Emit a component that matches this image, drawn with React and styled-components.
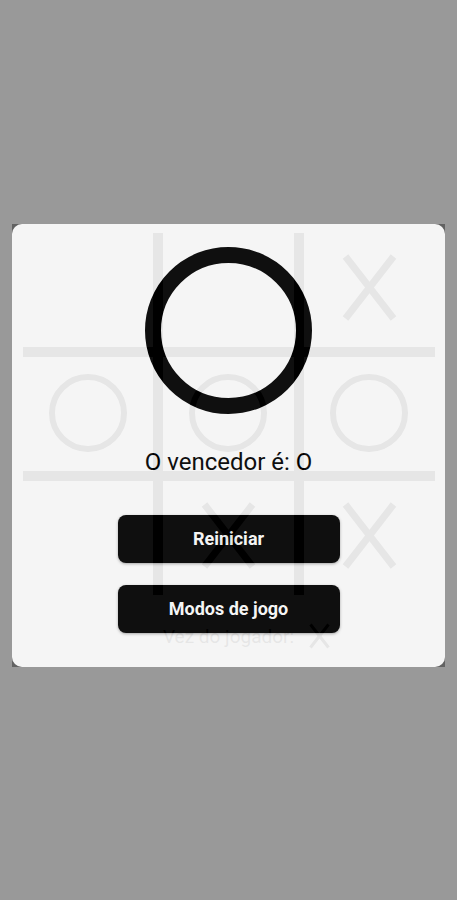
import React from 'react'
import styled, { createGlobalStyle } from 'styled-components'

const GlobalStyle = createGlobalStyle`
  html, body {
    margin: 0;
    padding: 0;
    background: #ffffff;
    font-family: Roboto, "Liberation Sans", sans-serif;
  }
`

let Page = styled.div`
  min-height: 900px;
  display: flex;
  flex-direction: column;
  align-items: center;
  padding-top: 233px;
  box-sizing: border-box;
`

let Board = styled.div`
  width: 412px;
  height: 362px;
  display: grid;
  grid-template-columns: repeat(3, 1fr);
  grid-template-rows: repeat(3, 1fr);
  gap: 10px;
  background: #000;
`

let Cell = styled.div`
  background: #fff;
  display: flex;
  align-items: center;
  justify-content: center;
  padding-bottom: ${(p) => (p.mark === 'X' ? '5px' : '2px')};
`

let Ring = styled.div`
  width: ${(p) => p.size}px;
  height: ${(p) => p.size}px;
  border: ${(p) => p.stroke}px solid #000;
  border-radius: 50%;
  box-sizing: border-box;
  flex-shrink: 0;
`

let Turn = styled.div`
  margin-top: 28px;
  padding-left: 36px;
  display: flex;
  align-items: center;
  gap: 15px;
  font-size: 19px;
  color: #000;
`

let Overlay = styled.div`
  position: fixed;
  inset: 0;
  background: rgba(0, 0, 0, 0.4);
  display: flex;
  align-items: center;
  justify-content: center;
  padding-bottom: 10px;
  box-sizing: border-box;
`

let Modal = styled.div`
  width: 433px;
  background: #fff;
  opacity: 0.9;
  border-radius: 10px;
  padding: 23px 0 34px;
  display: flex;
  flex-direction: column;
  align-items: center;
`

let Winner = styled.p`
  margin: 34px 0 0;
  font-size: 24px;
  line-height: 28px;
  color: #000;
`

let Actions = styled.div`
  margin-top: 39px;
  display: flex;
  flex-direction: column;
  gap: 22px;
`

let Button = styled.button`
  width: 222px;
  height: 48px;
  border: none;
  border-radius: 8px;
  background: #000;
  color: #fff;
  font-family: Roboto, "Liberation Sans", sans-serif;
  font-size: 18px;
  font-weight: 700;
  box-shadow: 0 1px 3px rgba(0, 0, 0, 0.35);
  cursor: pointer;
`

const Cross = ({ w = 55, h = 69, stroke = 7 }) => (
  <svg width={w} height={h} viewBox={`0 0 ${w} ${h}`}>
    <line x1={stroke / 2} y1={stroke / 2} x2={w - stroke / 2} y2={h - stroke / 2} stroke="#000" strokeWidth={stroke} />
    <line x1={w - stroke / 2} y1={stroke / 2} x2={stroke / 2} y2={h - stroke / 2} stroke="#000" strokeWidth={stroke} />
  </svg>
)

const cells = ['', '', 'X', 'O', 'O', 'O', '', 'X', 'X']

const App = () => {
  return (
    <>
      <GlobalStyle />
      <Page>
        <Board>
          {cells.map((c, i) => (
            <Cell key={i} mark={c}>
              {c === 'X' && <Cross />}
              {c === 'O' && <Ring size={78} stroke={6} />}
            </Cell>
          ))}
        </Board>
        <Turn>
          <span>Vez do jogador:</span>
          <Cross w={21} h={26} stroke={3} />
        </Turn>
      </Page>

      <Overlay>
        <Modal>
          <Ring size={167} stroke={16} />
          <Winner>O vencedor é: O</Winner>
          <Actions>
            <Button>Reiniciar</Button>
            <Button>Modos de jogo</Button>
          </Actions>
        </Modal>
      </Overlay>
    </>
  )
}

export default App
